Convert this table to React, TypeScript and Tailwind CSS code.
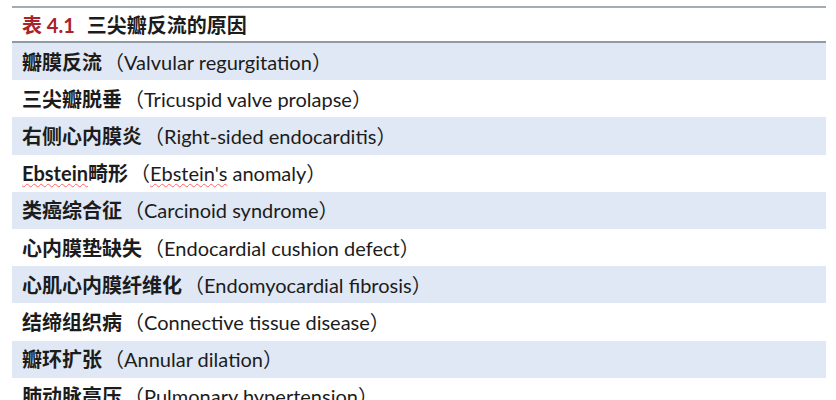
import React from "react";

const rows: { zh: React.ReactNode; en: React.ReactNode }[] = [
  { zh: "瓣膜反流", en: "Valvular regurgitation" },
  { zh: "三尖瓣脱垂", en: "Tricuspid valve prolapse" },
  { zh: "右侧心内膜炎", en: "Right-sided endocarditis" },
  {
    zh: (
      <>
        <span className="underline decoration-wavy decoration-red-400 decoration-1 underline-offset-2">Ebstein</span>畸形
      </>
    ),
    en: (
      <>
        <span className="underline decoration-wavy decoration-red-400 decoration-1 underline-offset-2">Ebstein's</span> anomaly
      </>
    ),
  },
  { zh: "类癌综合征", en: "Carcinoid syndrome" },
  { zh: "心内膜垫缺失", en: "Endocardial cushion defect" },
  { zh: "心肌心内膜纤维化", en: "Endomyocardial fibrosis" },
  { zh: "结缔组织病", en: "Connective tissue disease" },
  { zh: "瓣环扩张", en: "Annular dilation" },
  { zh: "肺动脉高压", en: "Pulmonary hypertension" },
];

export default function App() {
  return (
    <div
      className="w-[836px] h-[400px] overflow-hidden bg-white pt-[6px] pl-[12px] pr-[10px]"
      style={{ fontFamily: "Lato, 'Noto Sans CJK SC', sans-serif" }}
    >
      <div className="border-t-2 border-[#a3abb3]">
        <div className="h-[35px] flex items-center pl-[10px] text-[20px] font-bold text-[#1c1c1c] border-b-2 border-[#8f9ba6]">
          <span className="text-[#a8232b]">表 4.1</span>
          <span className="ml-[12px]">三尖瓣反流的原因</span>
        </div>
        {rows.map((r, i) => (
          <div
            key={i}
            className={`h-[37.2px] flex items-center pl-[10px] text-[20px] text-[#1c1c1c] ${
              i % 2 === 0 ? "bg-[#dfe8f4]" : "bg-white"
            }`}
          >
            <span className="font-bold">{r.zh}</span>
            <span className="ml-[2px]">（{r.en}）</span>
          </div>
        ))}
      </div>
    </div>
  );
}
